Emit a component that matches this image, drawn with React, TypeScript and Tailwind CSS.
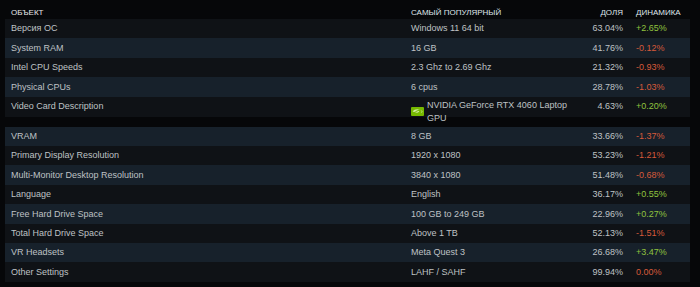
const ROWS = [
  { name: 'Версия ОС', top: 'Windows 11 64 bit', share: '63.04%', delta: '+2.65%' },
  { name: 'System RAM', top: '16 GB', share: '41.76%', delta: '-0.12%' },
  { name: 'Intel CPU Speeds', top: '2.3 Ghz to 2.69 Ghz', share: '21.32%', delta: '-0.93%' },
  { name: 'Physical CPUs', top: '6 cpus', share: '28.78%', delta: '-1.03%' },
  { name: 'Video Card Description', top: 'NVIDIA GeForce RTX 4060 Laptop GPU', share: '4.63%', delta: '+0.20%', gpu: true },
  { name: 'VRAM', top: '8 GB', share: '33.66%', delta: '-1.37%' },
  { name: 'Primary Display Resolution', top: '1920 x 1080', share: '53.23%', delta: '-1.21%' },
  { name: 'Multi-Monitor Desktop Resolution', top: '3840 x 1080', share: '51.48%', delta: '-0.68%' },
  { name: 'Language', top: 'English', share: '36.17%', delta: '+0.55%' },
  { name: 'Free Hard Drive Space', top: '100 GB to 249 GB', share: '22.96%', delta: '+0.27%' },
  { name: 'Total Hard Drive Space', top: 'Above 1 TB', share: '52.13%', delta: '-1.51%' },
  { name: 'VR Headsets', top: 'Meta Quest 3', share: '26.68%', delta: '+3.47%' },
  { name: 'Other Settings', top: 'LAHF / SAHF', share: '99.94%', delta: '0.00%' },
]

function NvidiaIcon() {
  return (
    <svg width="13" height="9" viewBox="0 0 13 9" className="shrink-0">
      <rect x="0" y="0" width="13" height="9" rx="1" fill="#76b900" />
      <path
        d="M1.6 4.6 C3.4 2.2 6.8 1.6 10 3.2 C8.2 2.6 6.2 2.8 5 3.8 C6.4 3.4 7.8 3.8 8.4 4.6 C7.2 5.9 5.2 6.3 3.6 5.6 C5 5.7 6.2 5.3 6.7 4.6 C5.8 3.9 4.3 4 3.2 5.1 Z"
        fill="#e4f3c4"
        fillOpacity="0.85"
      />
      <path d="M10.3 3.5 C11.2 4.2 11.2 5 10.3 5.7" stroke="#e4f3c4" strokeOpacity="0.85" strokeWidth="0.8" fill="none" />
    </svg>
  )
}

export default function App() {
  return (
    <div className="h-[287px] w-[700px] overflow-hidden bg-[#060709] font-['Liberation_Sans',Arial,sans-serif] text-[9px] text-[#bfc2c5]">
      <div className="ml-[5px] w-[685px]">
        {/* Header */}
        <div className="grid h-[19px] grid-cols-[406px_164px_48px_67px] items-center pt-[6px] text-[8px] uppercase leading-none text-[#dfe5ea]">
          <div className="pl-[6px] text-[#e6e8ea]">Объект</div>
          <div>Самый популярный</div>
          <div className="text-right">Доля</div>
          <div className="pl-[13px]">Динамика</div>
        </div>

        {ROWS.map((row, i) => {
          const even = i % 2 === 1
          const up = row.delta.startsWith('+')
          return (
            <div
              key={row.name}
              className={
                row.gpu
                  ? 'grid h-[30px] grid-cols-[406px_164px_48px_67px] bg-[linear-gradient(to_bottom,#0f1216_20px,transparent_20px)]'
                  : even
                    ? 'grid h-[19.4px] grid-cols-[406px_164px_48px_67px] bg-[#17212b]'
                    : 'grid h-[19.4px] grid-cols-[406px_164px_48px_67px] bg-[#0f1216]'
              }
            >
              <div className="flex h-[19.4px] items-center pl-[6px] pt-[1px]">{row.name}</div>
              {row.gpu ? (
                <div className="flex h-[30px] items-center gap-[3px]">
                  <NvidiaIcon />
                  <span className="leading-[12.5px]">{row.top}</span>
                </div>
              ) : (
                <div className="flex h-[19.4px] items-center pt-[1px]">{row.top}</div>
              )}
              <div className="flex h-[19.4px] items-center justify-end pt-[1px]">{row.share}</div>
              <div
                className={
                  up
                    ? 'flex h-[19.4px] items-center pl-[13px] pt-[1px] text-[#8fc23e]'
                    : 'flex h-[19.4px] items-center pl-[13px] pt-[1px] text-[#d65a3a]'
                }
              >
                {row.delta}
              </div>
            </div>
          )
        })}
      </div>
    </div>
  )
}
